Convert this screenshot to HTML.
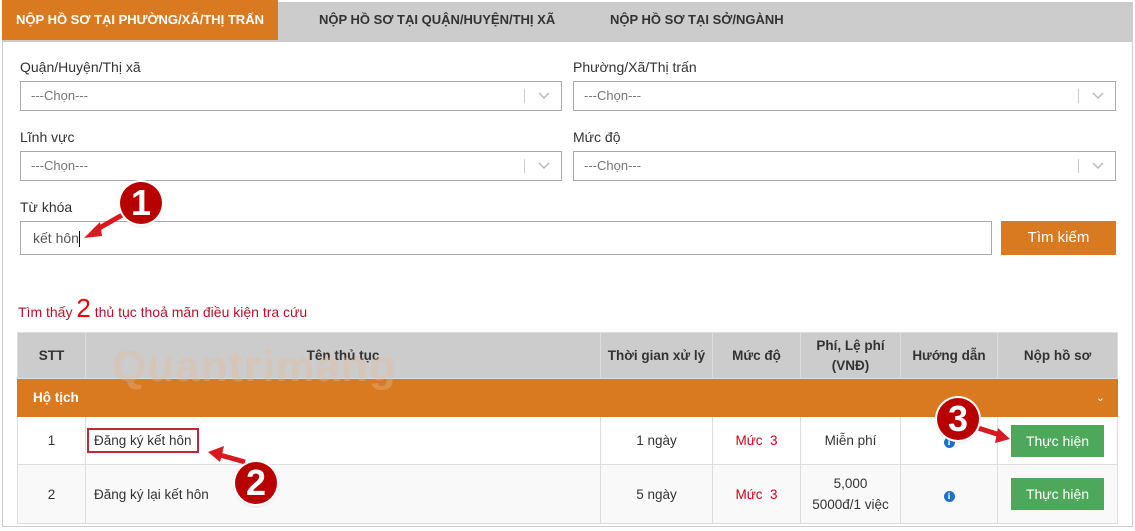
<!DOCTYPE html>
<html><head><meta charset="utf-8"><style>
*{box-sizing:border-box;margin:0;padding:0}
body{width:1135px;height:531px;background:#fff;font-family:"Liberation Sans","DejaVu Sans",sans-serif;font-size:14px;color:#333;position:relative;overflow:hidden}
.frame{position:absolute;left:2px;top:2px;width:1131px;height:525px;border:1px solid #ccc;border-top:none}
.tabs{position:absolute;left:2px;top:2px;width:1131px;height:40px;background:#ccc}
.tab{position:absolute;top:0;height:40px;line-height:40px;font-weight:bold;font-size:13px;color:#333}
.lbl{position:absolute;font-size:14px;color:#333}
.sel{position:absolute;height:30px;border:1px solid #aaa;background:#fff;font-size:13px;color:#777;line-height:28px;padding-left:10px}
.sel .sep{position:absolute;right:36px;top:7px;width:1px;height:14px;background:#ccc}
.sel svg{position:absolute;right:11px;top:10px}
.abs{position:absolute}
table{position:absolute;left:17px;top:332px;width:1101px;border-collapse:collapse;font-size:13.5px}
td,th{border:1px solid #ddd;text-align:center}
th{background:#ccc;font-weight:bold;color:#333;height:46px;line-height:20px}
.btn{display:inline-block;width:93px;height:32px;line-height:32px;background:#4ea85c;color:#fff;font-size:14px}
.red{color:#d0021b}
.info{display:inline-block;width:11px;height:11px;border-radius:50%;background:#1a73c8;color:#fff;font-size:9px;line-height:11px;font-weight:bold;font-family:"Liberation Serif",serif}
.badge{position:absolute;width:42px;height:42px;border-radius:50%;background:#b80000;color:#fff;font-size:36px;font-weight:bold;text-align:center;line-height:42px;box-shadow:0 0 0 2px #fff,0 1px 3px rgba(0,0,0,.4)}
</style></head><body>
<div class="tabs"></div>
<div class="tab" style="left:2px;width:276px;background:#d97a21;color:#fff;text-align:center">NỘP HỒ SƠ TẠI PHƯỜNG/XÃ/THỊ TRẤN</div>
<div class="tab" style="left:319px">NỘP HỒ SƠ TẠI QUẬN/HUYỆN/THỊ XÃ</div>
<div class="tab" style="left:610px">NỘP HỒ SƠ TẠI SỞ/NGÀNH</div>
<div class="frame" style="top:42px;height:485px"></div>

<div class="lbl" style="left:20px;top:59px">Quận/Huyện/Thị xã</div>
<div class="lbl" style="left:573px;top:59px">Phường/Xã/Thị trấn</div>
<div class="lbl" style="left:20px;top:129px">Lĩnh vực</div>
<div class="lbl" style="left:573px;top:129px">Mức độ</div>
<div class="lbl" style="left:20px;top:199px">Từ khóa</div>

<div class="sel" style="left:20px;top:81px;width:542px">---Chọn---<span class="sep"></span><svg width="12" height="8"><path d="M1 1l5 5 5-5" stroke="#bbb" stroke-width="1.5" fill="none"/></svg></div>
<div class="sel" style="left:573px;top:81px;width:543px">---Chọn---<span class="sep"></span><svg width="12" height="8"><path d="M1 1l5 5 5-5" stroke="#bbb" stroke-width="1.5" fill="none"/></svg></div>
<div class="sel" style="left:20px;top:151px;width:542px">---Chọn---<span class="sep"></span><svg width="12" height="8"><path d="M1 1l5 5 5-5" stroke="#bbb" stroke-width="1.5" fill="none"/></svg></div>
<div class="sel" style="left:573px;top:151px;width:543px">---Chọn---<span class="sep"></span><svg width="12" height="8"><path d="M1 1l5 5 5-5" stroke="#bbb" stroke-width="1.5" fill="none"/></svg></div>

<div class="sel" style="left:20px;top:221px;width:972px;height:34px;line-height:32px;color:#555;font-size:14px;padding-left:12px">kết hôn<span style="display:inline-block;width:1px;height:16px;background:#000;vertical-align:middle"></span></div>
<div class="abs" style="left:1001px;top:221px;width:115px;height:34px;background:#d97a21;color:#fff;text-align:center;line-height:34px;font-size:15px">Tìm kiếm</div>

<div class="abs" style="left:18px;top:296px;color:#b8102a;font-size:14px;line-height:24px">Tìm thấy <span style="font-size:26px;color:#e00">2</span> thủ tục thoả mãn điều kiện tra cứu</div>

<table>
<tr><th style="width:68px">STT</th><th style="width:515px">Tên thủ tục</th><th style="width:112px">Thời gian xử lý</th><th style="width:88px">Mức độ</th><th style="width:100px">Phí, Lệ phí<br>(VNĐ)</th><th style="width:97px">Hướng dẫn</th><th>Nộp hồ sơ</th></tr>
<tr><td colspan="6" style="background:#d97a21;color:#fff;font-weight:bold;text-align:left;padding-left:15px;height:38px;border-color:#d97a21">Hộ tịch</td><td style="background:#d97a21;border-color:#d97a21;text-align:right;padding-right:12px;color:#fff;font-size:11px">&#8964;</td></tr>
<tr style="height:48px"><td>1</td><td style="text-align:left;padding-left:1px"><span style="border:2px solid #c0283a;padding:3px 5px">Đăng ký kết hôn</span></td><td>1 ngày</td><td class="red">Mức&nbsp; 3</td><td>Miễn phí</td><td><span class="info">i</span></td><td><span class="btn">Thực hiện</span></td></tr>
<tr style="height:59px;background:#f9f9f9"><td>2</td><td style="text-align:left;padding-left:8px">Đăng ký lại kết hôn</td><td>5 ngày</td><td class="red">Mức&nbsp; 3</td><td style="line-height:21px">5,000<br>5000đ/1 việc</td><td><span class="info">i</span></td><td><span class="btn">Thực hiện</span></td></tr>
</table>

<div class="abs" style="left:112px;top:342px;font-size:44px;font-weight:bold;color:rgba(225,185,150,.35);letter-spacing:1px">Quantrimang</div>

<svg class="abs" style="left:0;top:0" width="1135" height="531">
<path d="M124 214 L94 231" stroke="#d71920" stroke-width="5"/><path d="M84 238 L100 222 L102 236 Z" fill="#d71920"/>
<path d="M245 462 L220 455" stroke="#d71920" stroke-width="5"/><path d="M208 452 L224 446 L220 462 Z" fill="#d71920"/>
<path d="M975 427 L1000 435" stroke="#d71920" stroke-width="5"/><path d="M1010 439 L995 443 L998 428 Z" fill="#d71920"/>
</svg>
<div class="badge" style="left:120px;top:182px">1</div>
<div class="badge" style="left:235px;top:462px">2</div>
<div class="badge" style="left:937px;top:398px">3</div>
</body></html>
